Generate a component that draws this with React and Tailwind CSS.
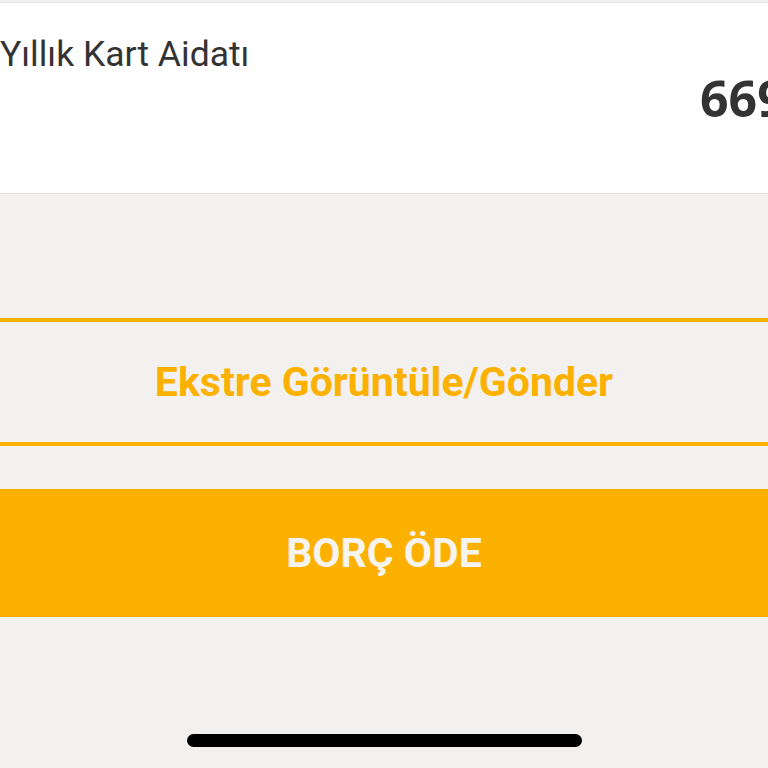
export default function App() {
  return (
    <div className="w-full h-[768px] bg-[#f2f1ef] overflow-hidden flex flex-col" style={{ fontFamily: 'Roboto, "Noto Sans", sans-serif' }}>
      <div className="mt-[2px] h-[192px] bg-white border-y border-[#e3e1df] flex flex-col overflow-hidden">
        <div className="mt-[34px] leading-none text-[35.5px] text-[#333333] whitespace-nowrap">
          Yıllık Kart Aidatı
        </div>
        <div className="mt-[0px] pl-[700px] leading-none text-[50px] font-bold text-[#333333] whitespace-nowrap" style={{ fontFamily: '"Open Sans", sans-serif' }}>
          669,00 TL
        </div>
      </div>
      <button className="mt-[124px] h-[128px] w-full border-y-4 border-[#fcb100] flex items-center justify-center">
        <span className="text-[41px] font-bold text-[#fcb100] leading-none">Ekstre Görüntüle/Gönder</span>
      </button>
      <button className="mt-[43px] h-[128px] w-full bg-[#fcb100] flex items-center justify-center">
        <span className="text-[41px] font-bold text-[#f7f3ee] leading-none">BORÇ ÖDE</span>
      </button>
      <div className="mt-[117px] mx-auto w-[395px] h-[13px] rounded-full bg-black" />
    </div>
  );
}
